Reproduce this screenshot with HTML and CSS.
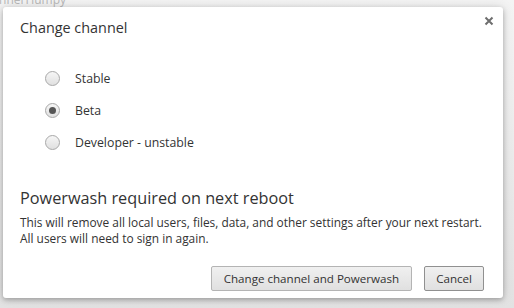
FILE: index.html
```html
<!DOCTYPE html>
<html lang="en">
<head>
    <meta charset="UTF-8">
    <title>Change channel</title>
    <link rel="stylesheet" href="styles.css">
</head>
<body>
    <div class="backdrop-text">innerHumpy</div>

    <div class="dialog">
        <div class="dialog-header">
            <h1>Change channel</h1>
            <button class="close-btn" aria-label="Close">
                <svg width="10" height="10" viewBox="0 0 10 10">
                    <path d="M1.5 1.5 L8.5 8.5 M8.5 1.5 L1.5 8.5" stroke="#6e6e6e" stroke-width="2"/>
                </svg>
            </button>
        </div>

        <!-- Channel options -->
        <div class="channel-list">
            <label class="channel">
                <input type="radio" name="channel" value="stable">
                <span class="radio"></span>
                Stable
            </label>
            <label class="channel">
                <input type="radio" name="channel" value="beta" checked>
                <span class="radio"></span>
                Beta
            </label>
            <label class="channel">
                <input type="radio" name="channel" value="dev">
                <span class="radio"></span>
                Developer - unstable
            </label>
        </div>

        <div class="warning">
            <h2>Powerwash required on next reboot</h2>
            <p>This will remove all local users, files, data, and other settings after your next restart.<br>All users will need to sign in again.</p>
        </div>

        <div class="actions">
            <button class="btn btn-primary">Change channel and Powerwash</button>
            <button class="btn btn-cancel">Cancel</button>
        </div>
    </div>
</body>
</html>
```

FILE: styles.css
```css
* {
    margin: 0;
    padding: 0;
    box-sizing: border-box;
    font-family: 'Open Sans', 'Noto Sans', sans-serif;
}

body {
    width: 514px;
    height: 308px;
    overflow: hidden;
    background: linear-gradient(#f4f4f4, #e2e2e2);
    padding: 7px 11px 0 3px;
}

.backdrop-text {
    position: absolute;
    top: -9px;
    left: -4px;
    font-size: 12px;
    color: #b8b8b8;
}

.dialog {
    position: relative;
    width: 500px;
    height: 291px;
    background: #fff;
    border-radius: 3px;
    box-shadow: 0 2px 5px rgba(0, 0, 0, 0.25), 0 0 12px rgba(0, 0, 0, 0.12);
    padding: 0 19px 0 17px;
    color: #333;
}

.dialog-header {
    display: flex;
    justify-content: space-between;
    align-items: flex-start;
    height: 44px;
    padding-top: 10px;
}

h1 {
    font-size: 14.4px;
    font-weight: 400;
    line-height: 21px;
    color: #333;
}

.close-btn {
    border: none;
    background: none;
    margin-top: -1px;
    margin-right: -10px;
    width: 10px;
    height: 10px;
    display: flex;
}

.channel-list {
    display: flex;
    flex-direction: column;
    gap: 12px;
    padding: 17px 0 0 25px;
}

.channel {
    display: flex;
    align-items: center;
    gap: 15px;
    font-size: 12.3px;
    color: #333;
    height: 20px;
}

.channel input { display: none; }

.radio {
    width: 15px;
    height: 15px;
    border-radius: 50%;
    border: 1px solid #a8a8a8;
    background: linear-gradient(#f6f6f6, #e0e0e0);
    display: flex;
    align-items: center;
    justify-content: center;
}

.channel input:checked + .radio::after {
    content: '';
    width: 7px;
    height: 7px;
    border-radius: 50%;
    background: #555;
}

.warning {
    margin-top: 35px;
}

h2 {
    font-size: 16.25px;
    font-weight: 400;
    color: #333;
    line-height: 22px;
}

.warning p {
    font-size: 11.9px;
    line-height: 16px;
    color: #333;
    margin-top: 5px;
    white-space: nowrap;
}

.actions {
    display: flex;
    justify-content: flex-end;
    gap: 12px;
    margin-top: 20px;
}

.btn {
    height: 25px;
    padding: 0 11px;
    font-size: 11.6px;
    color: #333;
    border: 1px solid #b4b4b4;
    border-radius: 2px;
    background: linear-gradient(#f0f0f0, #e0e0e0);
}

.btn-primary {
    padding: 0 12px;
}

.btn-cancel {
    border-color: #909090;
}
```
